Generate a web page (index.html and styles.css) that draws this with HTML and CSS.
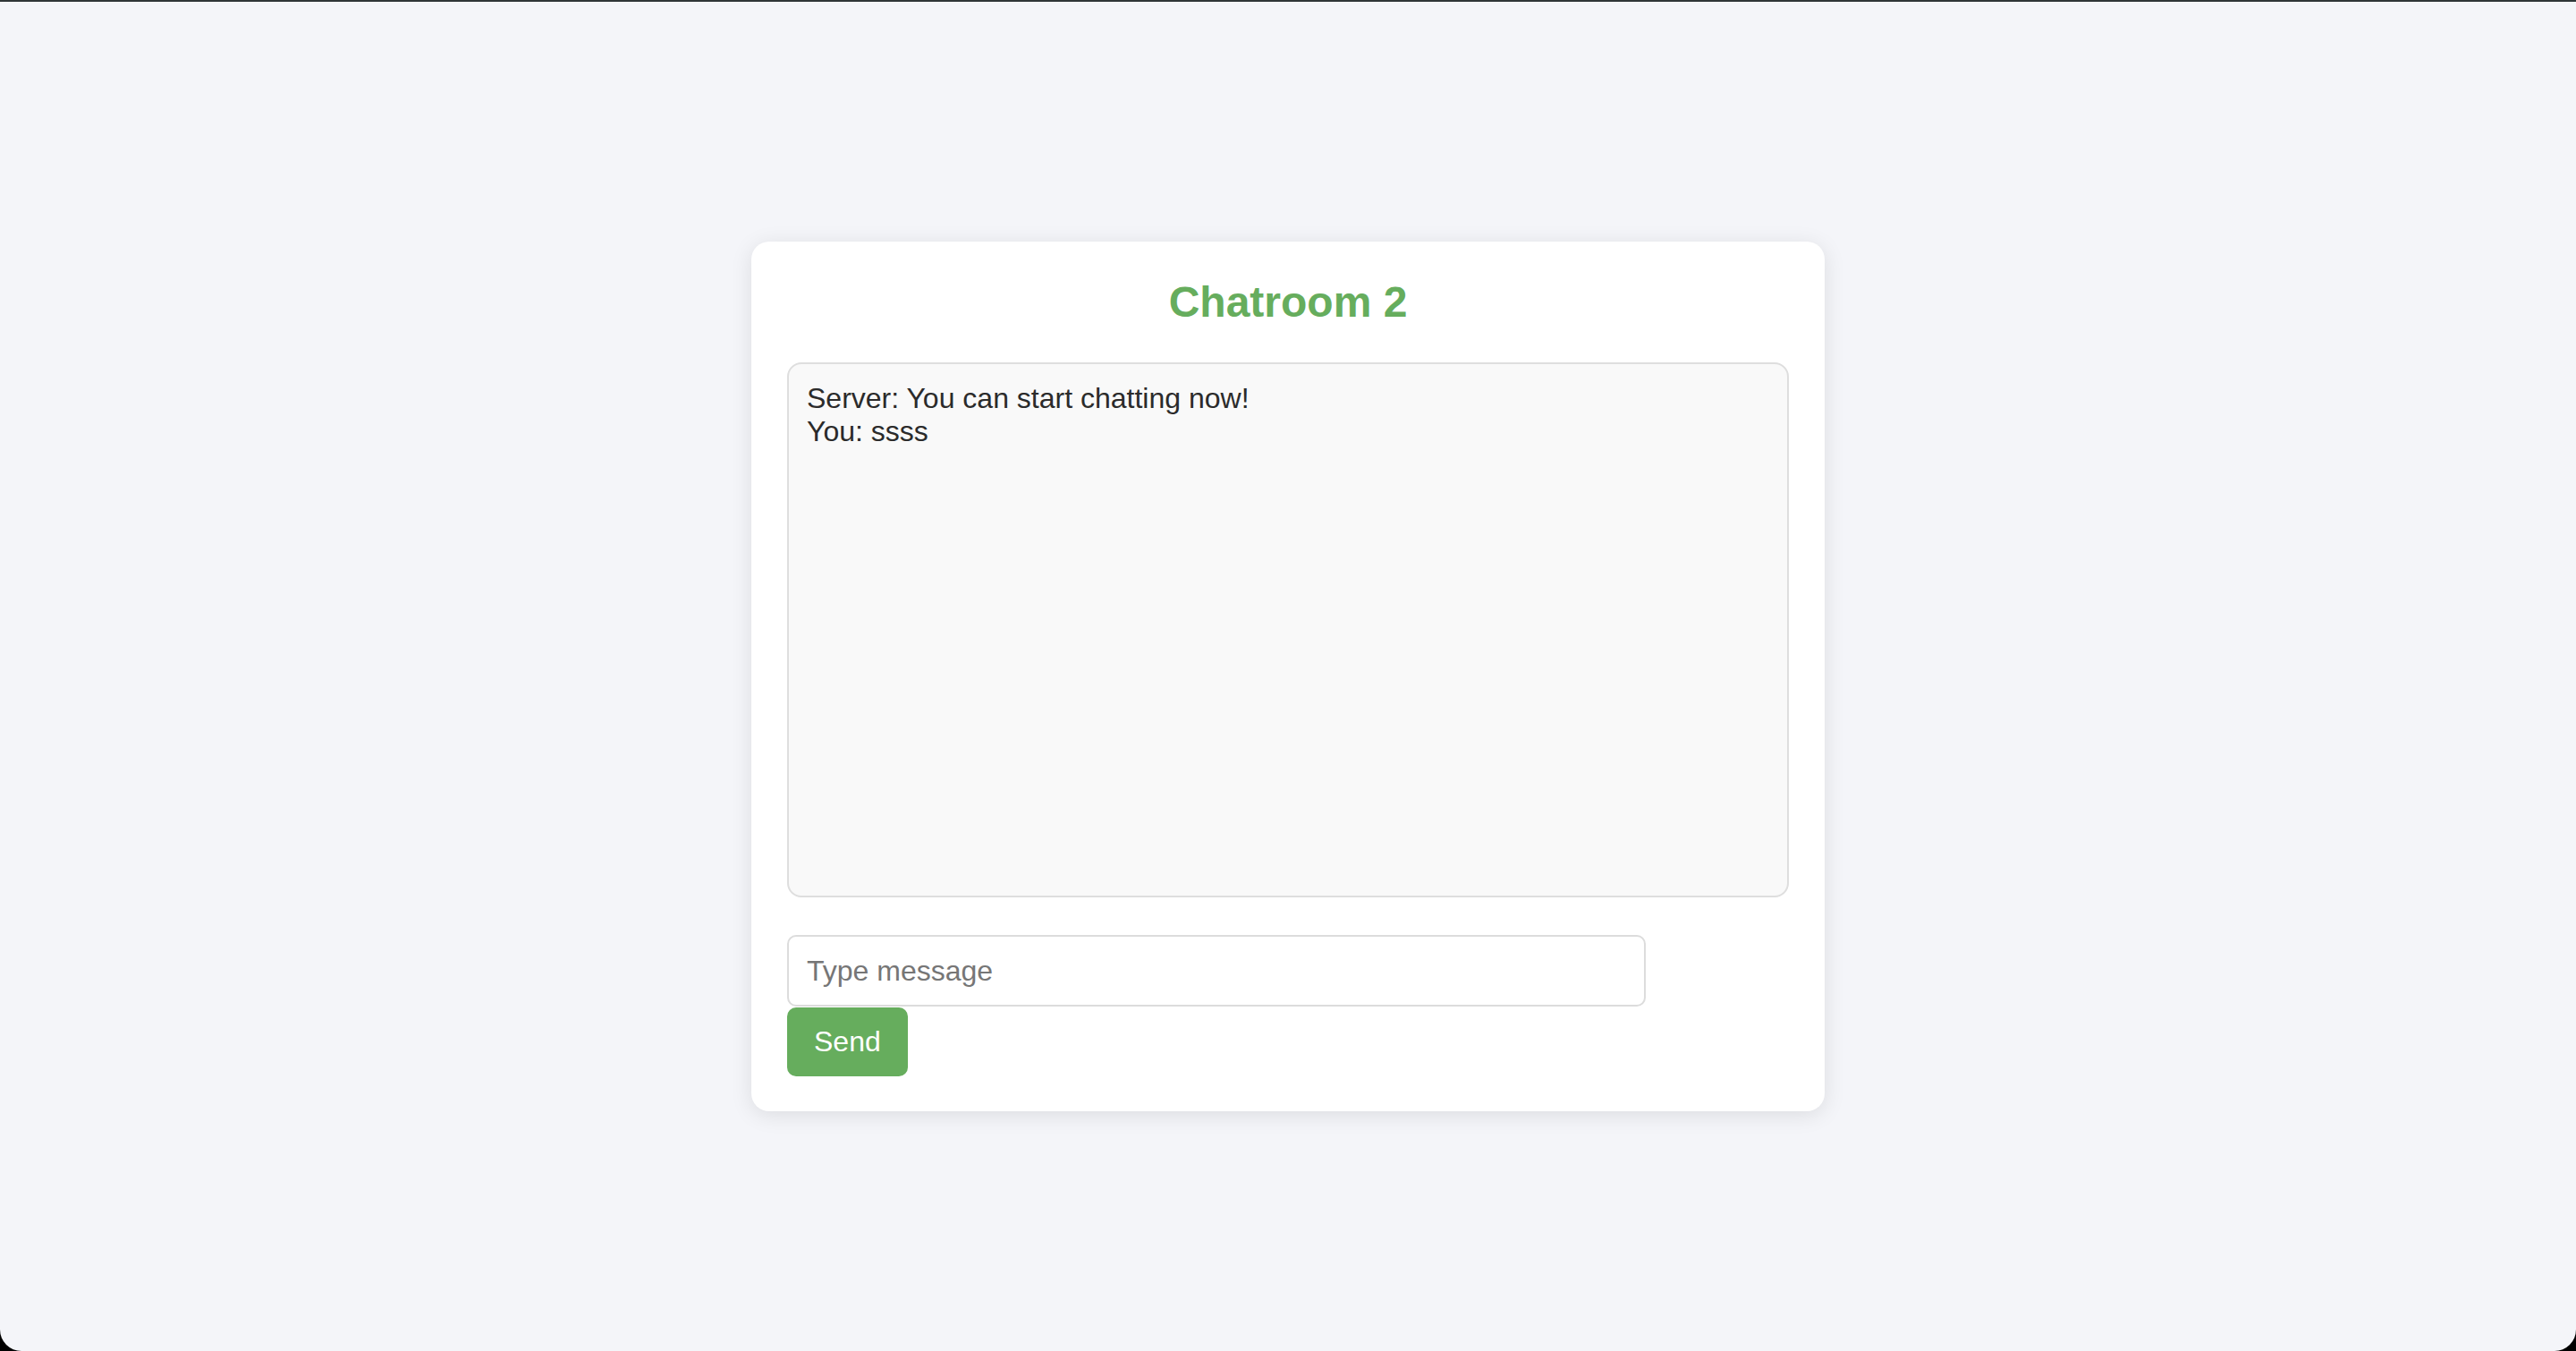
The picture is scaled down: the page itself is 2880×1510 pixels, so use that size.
FILE: index.html
```html
<!DOCTYPE html>
<html lang="en">
<head>
<meta charset="utf-8">
<title>Chatroom 2</title>
<link rel="stylesheet" href="styles.css">
</head>
<body>
<div class="screen">
  <div class="card">
    <h2 class="title">Chatroom 2</h2>
    <div class="messages">
      <div class="msg">Server: You can start chatting now!</div>
      <div class="msg">You: ssss</div>
    </div>
    <div class="composer">
      <input class="msg-input" type="text" placeholder="Type message">
      <button class="send-btn" type="button">Send</button>
    </div>
  </div>
</div>
</body>
</html>
```

FILE: styles.css
```css
html {
  background: #000;
}
body {
  margin: 0;
  font-family: "Liberation Sans", Arial, sans-serif;
}
.screen {
  height: 1510px;
  box-sizing: border-box;
  border-top: 2px solid #2f3537;
  background: #f4f5f9;
  border-radius: 0 0 24px 24px;
  display: flex;
  align-items: center;
  justify-content: center;
}
.card {
  width: 1200px;
  box-sizing: border-box;
  background: #fff;
  border-radius: 20px;
  padding: 40px 40px 39px;
  box-shadow: 0 4px 24px rgba(0, 0, 0, 0.1);
}
.title {
  margin: 0 0 40px;
  text-align: center;
  color: #66ad5d;
  font-size: 48px;
  font-weight: bold;
}
.messages {
  height: 598px;
  box-sizing: border-box;
  background: #f9f9f9;
  border: 2px solid #dedede;
  border-radius: 16px;
  padding: 20px;
  font-size: 32px;
  color: #2b2b2b;
}
.composer {
  margin-top: 42px;
}
.msg-input {
  display: block;
  width: 960px;
  height: 80px;
  box-sizing: border-box;
  border: 2px solid #dcdcdc;
  border-radius: 10px;
  padding: 0 20px;
  font-family: "Liberation Sans", Arial, sans-serif;
  font-size: 32px;
  color: #333;
  background: #fff;
}
.msg-input::placeholder {
  color: #767676;
}
.send-btn {
  display: block;
  margin-top: 1px;
  height: 77px;
  padding: 0 30px;
  border: none;
  border-radius: 10px;
  background: #66ad5d;
  color: #fff;
  font-family: "Liberation Sans", Arial, sans-serif;
  font-size: 32px;
}
```
